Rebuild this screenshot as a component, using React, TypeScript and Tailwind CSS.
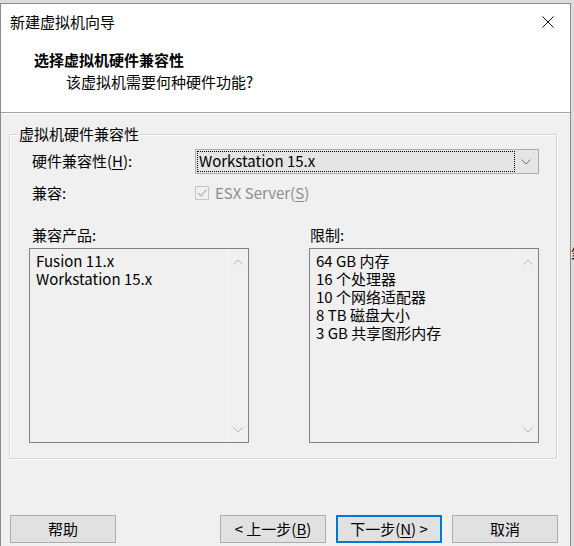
const font = { fontFamily: '"Noto Sans CJK SC", "Noto Sans", sans-serif' };

function Chevron({ up = false, color = "#b8b8b8" }: { up?: boolean; color?: string }) {
  return (
    <svg width="10" height="6" viewBox="0 0 10 6" className="block">
      <path
        d={up ? "M0.5 5.5 L5 1 L9.5 5.5" : "M0.5 0.5 L5 5 L9.5 0.5"}
        fill="none"
        stroke={color}
        strokeWidth="1"
      />
    </svg>
  );
}

function ListBox({ items, width }: { items: string[]; width: string }) {
  return (
    <div className={`${width} mt-[3px] h-[195px] flex border border-[#828282] bg-[#f0f0f0]`}>
      <div className="flex-1 pl-[6px] pt-[3px] text-[15px] leading-[18px] text-black">
        {items.map((t) => (
          <div key={t} className="whitespace-nowrap">{t}</div>
        ))}
      </div>
      {/* scrollbar (disabled) */}
      <div className="w-[21px] flex flex-col items-center justify-between border-l border-[#f7f7f7] pt-[10px] pb-[9px]">
        <Chevron up />
        <Chevron />
      </div>
    </div>
  );
}

function Btn({ children, primary = false, className = "" }: { children: React.ReactNode; primary?: boolean; className?: string }) {
  return (
    <div
      className={`w-[106px] h-[28px] flex items-center justify-center bg-[#e1e1e1] text-[15px] text-black ${
        primary ? "border-2 border-[#0078d7]" : "border border-[#adadad]"
      } ${className}`}
    >
      {children}
    </div>
  );
}

export default function App() {
  return (
    <div className="w-[574px] h-[546px] overflow-hidden flex bg-[#dcdcdc] pt-[3px]" style={font}>
      {/* window */}
      <div className="w-[571px] shrink-0 flex flex-col border-l border-t border-r border-[#8c8c8c] bg-[#f0f0f0]">
        {/* title bar */}
        <div className="h-[36px] flex items-center bg-white">
          <span className="pl-[9px] text-[15px] text-black">新建虚拟机向导</span>
          <div className="ml-auto w-[44px] h-full flex items-center justify-center">
            <svg width="12" height="12" viewBox="0 0 12 12">
              <path d="M0.5 0.5 L11.5 11.5 M11.5 0.5 L0.5 11.5" stroke="#111" strokeWidth="1" />
            </svg>
          </div>
        </div>

        {/* header */}
        <div className="h-[73px] bg-white border-b border-[#a0a0a0] pl-[33px] pt-[10px]">
          <div className="text-[15px] leading-[20px] font-bold text-black">选择虚拟机硬件兼容性</div>
          <div className="pl-[32px] mt-[2px] text-[15px] leading-[20px] text-black">该虚拟机需要何种硬件功能?</div>
        </div>
        <div className="h-px bg-white" />

        {/* body */}
        <div className="pl-[8px] pr-[13px] pt-[10px]">
          <fieldset className="border border-[#d5d5d5] shadow-[inset_1px_1px_0_#ffffff,1px_1px_0_#ffffff]">
            <legend className="ml-[9px] bg-[#f0f0f0] text-[15px] leading-[20px] text-black">虚拟机硬件兼容性</legend>

            <div className="pl-[19px] pr-[17px] pb-[15px]">
              {/* hardware compatibility */}
              <div className="mt-[5px] h-[25px] flex items-center">
                <span className="w-[166px] pl-[3px] text-[15px] text-black">
                  硬件兼容性(<u className="underline-offset-2">H</u>):
                </span>
                <div className="flex-1 h-full flex border border-[#adadad] bg-[#e5e5e5] p-px">
                  <div className="flex-1 flex items-center border border-dotted border-black pl-[1px] text-[15px] text-black">
                    Workstation 15.x
                  </div>
                  <div className="w-[22px] flex items-center justify-center">
                    <Chevron color="#707070" />
                  </div>
                </div>
              </div>

              {/* compat */}
              <div className="mt-[7px] h-[24px] flex items-center">
                <span className="w-[166px] pl-[3px] text-[15px] text-black">兼容:</span>
                <div className="w-[14px] h-[14px] border border-[#c6c6c6] bg-[#f0f0f0] flex items-center justify-center">
                  <svg width="10" height="10" viewBox="0 0 10 10">
                    <path d="M1 5 L4 8 L9.5 1.5" fill="none" stroke="#b9b9b9" strokeWidth="1.2" />
                  </svg>
                </div>
                <span className="ml-[6px] text-[15px] text-[#8d8d8d]">
                  ESX Server(<u className="underline-offset-2">S</u>)
                </span>
              </div>

              {/* lists */}
              <div className="mt-[20px] grid grid-cols-[220px_1fr] gap-x-[60px]">
                <div>
                  <div className="pl-[3px] text-[15px] leading-[20px] text-black">兼容产品:</div>
                  <ListBox width="w-[220px]" items={["Fusion 11.x", "Workstation 15.x"]} />
                </div>
                <div>
                  <div className="pl-[1px] text-[15px] leading-[20px] text-black">限制:</div>
                  <ListBox
                    width="w-full"
                    items={["64 GB 内存", "16 个处理器", "10 个网络适配器", "8 TB 磁盘大小", "3 GB 共享图形内存"]}
                  />
                </div>
              </div>
            </div>
          </fieldset>
        </div>

        {/* buttons */}
        <div className="mt-[56px] pl-[9px] flex">
          <Btn>帮助</Btn>
          <Btn className="ml-[104px]">
            &lt; 上一步(<u className="underline-offset-2">B</u>)
          </Btn>
          <Btn primary className="ml-[10px]">
            下一步(<u className="underline-offset-2">N</u>) &gt;
          </Btn>
          <Btn className="ml-[10px]">取消</Btn>
        </div>
      </div>

      {/* window behind */}
      <div className="flex-1 overflow-hidden pt-[240px]">
        <span className="block whitespace-nowrap text-[15px] text-black">笔</span>
      </div>
    </div>
  );
}
